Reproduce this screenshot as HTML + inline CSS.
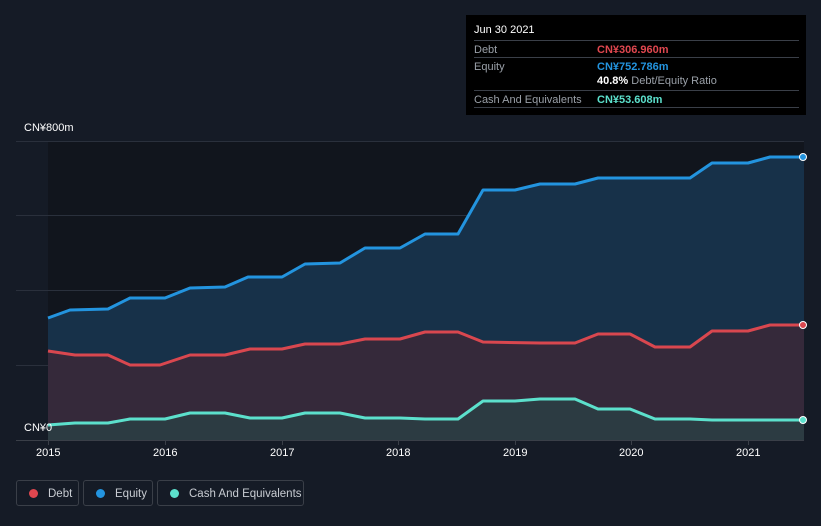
<!DOCTYPE html>
<html><head><meta charset="utf-8"><style>
body{margin:0;width:821px;height:526px;background:#151b26;font-family:"Liberation Sans",sans-serif;overflow:hidden;position:relative}
.tt{position:absolute;left:466px;top:15px;width:340px;height:100px;background:#000;color:#fff;font-size:11px}
.row{position:absolute;left:8px;width:325px;border-top:1px solid #3a3f48;height:17px}
.lab{position:absolute;left:0;top:3px;color:#9aa0a8}
.val{position:absolute;left:123px;top:3px;font-weight:bold}
.leg{position:absolute;top:480px;height:26px;border:1px solid #3a3f48;border-radius:3px;color:#c8ccd2;font-size:11.5px;line-height:26px;box-sizing:border-box;white-space:nowrap;overflow:hidden}
.leg i{display:inline-block;width:9px;height:9px;border-radius:50%;margin:0 10px 0 12px;vertical-align:-1px}
.ax{position:absolute;color:#fff;font-size:11px}
</style></head><body>
<svg width="821" height="526" style="position:absolute;left:0;top:0">
<rect x="48" y="141" width="756" height="299" fill="#11151d"/>
<g stroke="#2a303c" stroke-width="1">
<line x1="16" y1="141.5" x2="804" y2="141.5"/><line x1="16" y1="215.5" x2="804" y2="215.5"/>
<line x1="16" y1="290.5" x2="804" y2="290.5"/><line x1="16" y1="365.5" x2="804" y2="365.5"/>
</g>
<polygon fill="#173149" points="48,318 70,310 108,309 130,298 165,298 190,288 225,287 248,277 282,277 305,264 340,263 365,248 400,248 425,234 458,234 483,190 515,190 540,184 575,184 598,178 690,178 712,163 748,163 770,157 804,157 804,440 48,440"/>
<polygon fill="#35293a" points="48,351 75,355 108,355 130,365 160,365 190,355 225,355 250,349 282,349 305,344 340,344 365,339 400,339 425,332 458,332 483,342 540,343 575,343 598,334 630,334 655,347 690,347 712,331 748,331 770,325 804,325 804,440 48,440"/>
<polygon fill="#2c3b42" points="48,425 75,423 108,423 130,419 165,419 190,413 225,413 250,418 282,418 305,413 340,413 365,418 400,418 425,419 458,419 483,401 515,401 540,399 575,399 598,409 630,409 655,419 690,419 712,420 770,420 804,420 804,440 48,440"/>
<g fill="none" stroke-width="3" stroke-linejoin="round">
<polyline stroke="#2394df" points="48,318 70,310 108,309 130,298 165,298 190,288 225,287 248,277 282,277 305,264 340,263 365,248 400,248 425,234 458,234 483,190 515,190 540,184 575,184 598,178 690,178 712,163 748,163 770,157 804,157"/>
<polyline stroke="#d9474f" points="48,351 75,355 108,355 130,365 160,365 190,355 225,355 250,349 282,349 305,344 340,344 365,339 400,339 425,332 458,332 483,342 540,343 575,343 598,334 630,334 655,347 690,347 712,331 748,331 770,325 804,325"/>
<polyline stroke="#5ce0cc" points="48,425 75,423 108,423 130,419 165,419 190,413 225,413 250,418 282,418 305,413 340,413 365,418 400,418 425,419 458,419 483,401 515,401 540,399 575,399 598,409 630,409 655,419 690,419 712,420 770,420 804,420"/>
</g>
<circle cx="803" cy="157" r="3.5" fill="#2394df" stroke="#fff" stroke-width="1"/>
<circle cx="803" cy="325" r="3.5" fill="#d9474f" stroke="#fff" stroke-width="1"/>
<circle cx="803" cy="420" r="3.5" fill="#5ce0cc" stroke="#fff" stroke-width="1"/>
<line x1="16" y1="440.5" x2="804" y2="440.5" stroke="#3a3f48"/>
<g stroke="#3a3f48"><line x1="48.5" y1="440" x2="48.5" y2="445"/><line x1="165.5" y1="440" x2="165.5" y2="445"/><line x1="282.5" y1="440" x2="282.5" y2="445"/><line x1="398.5" y1="440" x2="398.5" y2="445"/><line x1="515.5" y1="440" x2="515.5" y2="445"/><line x1="631.5" y1="440" x2="631.5" y2="445"/><line x1="748.5" y1="440" x2="748.5" y2="445"/></g>
</svg>
<div class="ax" style="left:24px;top:122px">CN¥800m</div>
<div class="ax" style="left:24px;top:422px">CN¥0</div>
<div class="ax" style="left:36px;top:447px">2015</div>
<div class="ax" style="left:153px;top:447px">2016</div>
<div class="ax" style="left:270px;top:447px">2017</div>
<div class="ax" style="left:386px;top:447px">2018</div>
<div class="ax" style="left:503px;top:447px">2019</div>
<div class="ax" style="left:619px;top:447px">2020</div>
<div class="ax" style="left:736px;top:447px">2021</div>
<div class="tt">
<div style="position:absolute;left:8px;top:9px">Jun 30 2021</div>
<div class="row" style="top:25px"><span class="lab">Debt</span><span class="val" style="color:#e0474f">CN¥306.960m</span></div>
<div class="row" style="top:42px"><span class="lab">Equity</span><span class="val" style="color:#2394df">CN¥752.786m</span></div>
<div style="position:absolute;left:131px;top:60px"><b>40.8%</b> <span style="color:#9aa0a8">Debt/Equity Ratio</span></div>
<div class="row" style="top:75px;height:16px;border-bottom:1px solid #3a3f48"><span class="lab">Cash And Equivalents</span><span class="val" style="color:#5ce0cc">CN¥53.608m</span></div>
</div>
<div class="leg" style="left:16px;width:63px"><i style="background:#e0474f"></i>Debt</div>
<div class="leg" style="left:83px;width:70px"><i style="background:#2394df"></i>Equity</div>
<div class="leg" style="left:157px;width:147px"><i style="background:#5ce0cc"></i>Cash And Equivalents</div>
</body></html>
